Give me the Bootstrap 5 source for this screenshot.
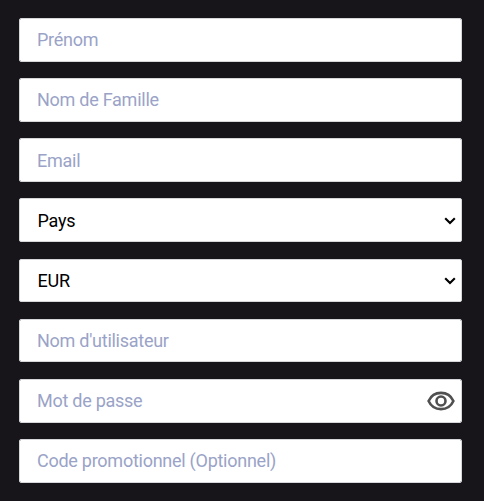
<!DOCTYPE html>
<html lang="fr">
<head>
<meta charset="utf-8">
<meta name="viewport" content="width=device-width, initial-scale=1">
<title>Inscription</title>
<link href="https://cdn.jsdelivr.net/npm/bootstrap@5.3.0/dist/css/bootstrap.min.css" rel="stylesheet">
<style>
body { background: #17151a; font-family: Roboto, "Liberation Sans", sans-serif; }
.signup { padding: 17.92px 22px 0 19px; gap: 16.53px; }
.signup .form-control, .signup .form-select {
  height: 43.66px; padding: 0 17px; font-size: 18px; line-height: 27px;
  letter-spacing: -.26px; color: #000; background-color: #fff;
  border: 1px solid #d5d7da; border-radius: 2px;
}
.signup .form-control::placeholder { color: #9aa3c7; opacity: 1; }
.signup .form-select {
  padding-left: 17.6px;
  background-image: url("data:image/svg+xml,%3Csvg xmlns='http://www.w3.org/2000/svg' viewBox='0 0 12 8'%3E%3Cpath d='M1.2 1.3 6 6.1 10.8 1.3' fill='none' stroke='%23000' stroke-width='2.1'/%3E%3C/svg%3E");
  background-size: 12px 8px; background-position: right 5px top 17.4px;
}
.eye-toggle { right: 7px; width: 28px; height: 20px; line-height: 0; }
</style>
</head>
<body>
<form class="signup d-flex flex-column">
  <input class="form-control" type="text" placeholder="Prénom">
  <input class="form-control" type="text" placeholder="Nom de Famille">
  <input class="form-control" type="email" placeholder="Email">
  <select class="form-select"><option>Pays</option></select>
  <select class="form-select"><option>EUR</option></select>
  <input class="form-control" type="text" placeholder="Nom d'utilisateur">
  <div class="position-relative">
    <input class="form-control" type="password" placeholder="Mot de passe">
    <button type="button" class="eye-toggle btn p-0 border-0 position-absolute top-50 translate-middle-y" aria-label="Afficher le mot de passe">
      <svg width="28" height="20" viewBox="0 0 28 20" fill="none" stroke="#505050" stroke-width="2.6">
        <path d="M1.6 10C4 4.7 8.6 1.9 14 1.9S24 4.7 26.4 10C24 15.3 19.4 18.1 14 18.1S4 15.3 1.6 10Z"/>
        <circle cx="14" cy="10" r="4.5"/>
      </svg>
    </button>
  </div>
  <input class="form-control" type="text" placeholder="Code promotionnel (Optionnel)">
</form>
<script src="https://cdn.jsdelivr.net/npm/bootstrap@5.3.0/dist/js/bootstrap.bundle.min.js"></script>
</body>
</html>
